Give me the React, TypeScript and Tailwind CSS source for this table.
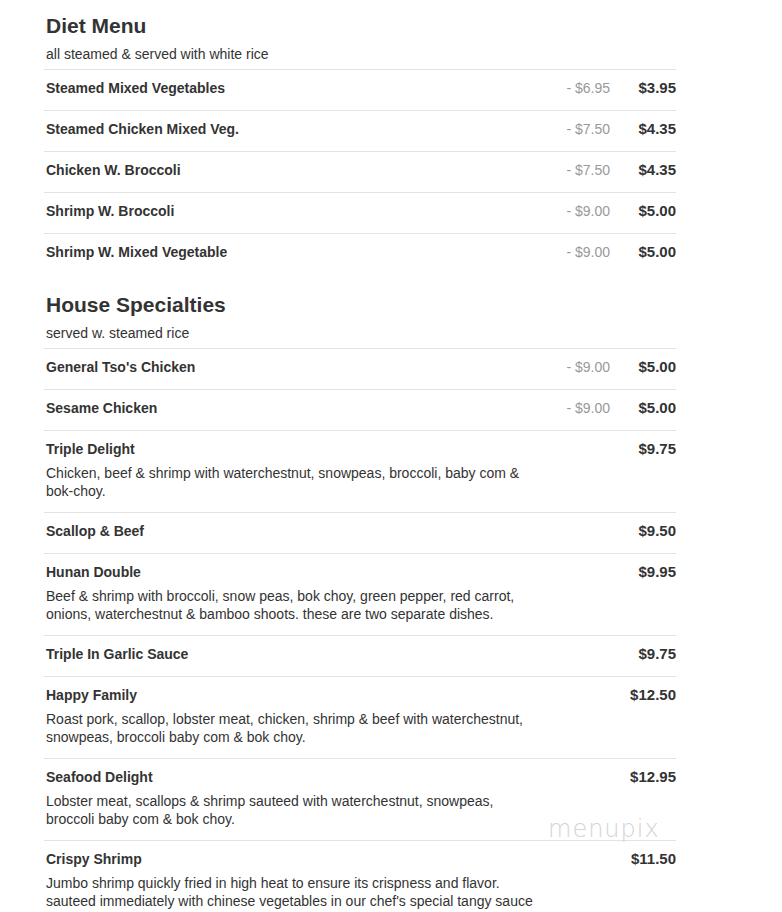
import React from "react";

type Item = { name: string; old?: string; price: string; desc?: string };

const diet: Item[] = [
  { name: "Steamed Mixed Vegetables", old: "- $6.95", price: "$3.95" },
  { name: "Steamed Chicken Mixed Veg.", old: "- $7.50", price: "$4.35" },
  { name: "Chicken W. Broccoli", old: "- $7.50", price: "$4.35" },
  { name: "Shrimp W. Broccoli", old: "- $9.00", price: "$5.00" },
  { name: "Shrimp W. Mixed Vegetable", old: "- $9.00", price: "$5.00" },
];

const house: Item[] = [
  { name: "General Tso's Chicken", old: "- $9.00", price: "$5.00" },
  { name: "Sesame Chicken", old: "- $9.00", price: "$5.00" },
  {
    name: "Triple Delight",
    price: "$9.75",
    desc: "Chicken, beef & shrimp with waterchestnut, snowpeas, broccoli, baby com & bok-choy.",
  },
  { name: "Scallop & Beef", price: "$9.50" },
  {
    name: "Hunan Double",
    price: "$9.95",
    desc: "Beef & shrimp with broccoli, snow peas, bok choy, green pepper, red carrot, onions, waterchestnut & bamboo shoots. these are two separate dishes.",
  },
  { name: "Triple In Garlic Sauce", price: "$9.75" },
  {
    name: "Happy Family",
    price: "$12.50",
    desc: "Roast pork, scallop, lobster meat, chicken, shrimp & beef with waterchestnut, snowpeas, broccoli baby com & bok choy.",
  },
  {
    name: "Seafood Delight",
    price: "$12.95",
    desc: "Lobster meat, scallops & shrimp sauteed with waterchestnut, snowpeas, broccoli baby com & bok choy.",
  },
  {
    name: "Crispy Shrimp",
    price: "$11.50",
    desc: "Jumbo shrimp quickly fried in high heat to ensure its crispness and flavor. sauteed immediately with chinese vegetables in our chef's special tangy sauce",
  },
];

function Row({ item }: { item: Item }) {
  return (
    <div
      className={
        item.desc
          ? "flex border-t border-[#e3e3e3] pl-[2px] pt-[9px] pb-[12px]"
          : "flex border-t border-[#e3e3e3] pl-[2px] pt-[9px] pb-[13px]"
      }
    >
      <div className="flex-1 min-w-0">
        <div className="text-[14px] leading-[18px] font-bold text-[#333]">{item.name}</div>
        {item.desc && (
          <div className="mt-[6px] max-w-[492px] text-[14px] leading-[18px] text-[#333]">
            {item.desc}
          </div>
        )}
      </div>
      <div className="text-[14px] leading-[18px] text-[#999] whitespace-nowrap">{item.old}</div>
      <div className="w-[66px] text-right text-[15px] leading-[18px] font-bold text-[#333] whitespace-nowrap">
        {item.price}
      </div>
    </div>
  );
}

function Section({ title, sub, items }: { title: string; sub: string; items: Item[] }) {
  return (
    <div className="mb-[19px]">
      <h2 className="pl-[2px] text-[21px] leading-[24px] font-bold text-[#333]">{title}</h2>
      <div className="pl-[2px] mt-[7px] mb-[6px] text-[14px] leading-[18px] text-[#333]">{sub}</div>
      {items.map((it) => (
        <Row key={it.name} item={it} />
      ))}
    </div>
  );
}

export default function App() {
  return (
    <div
      className="relative w-[782px] h-[912px] overflow-hidden bg-white"
      style={{ fontFamily: '"Liberation Sans", Arial, sans-serif' }}
    >
      <div className="ml-[44px] w-[632px] pt-[14px]">
        <Section title="Diet Menu" sub="all steamed & served with white rice" items={diet} />
        <Section title="House Specialties" sub="served w. steamed rice" items={house} />
      </div>
      <div
        className="absolute left-[548px] top-[815px] text-[24px] leading-[28px] tracking-[1px] text-[#d4d4d4] font-light"
        style={{ fontFamily: '"DejaVu Sans", sans-serif', fontWeight: 200 }}
      >
        menupix
      </div>
    </div>
  );
}
